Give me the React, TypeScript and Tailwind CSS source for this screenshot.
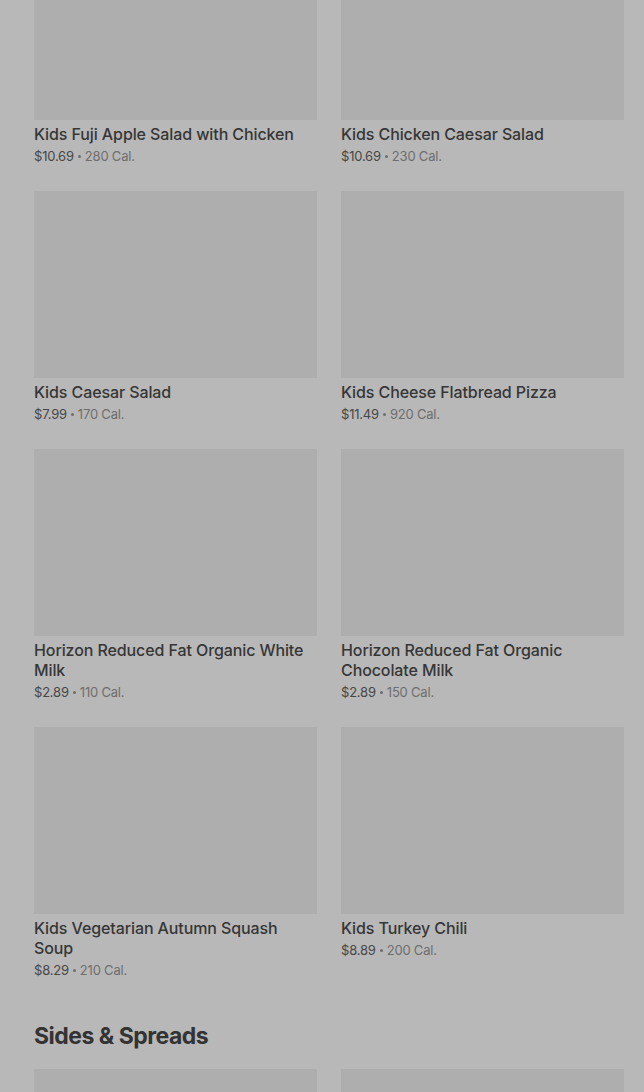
const ITEMS = [
  { name: 'Kids Fuji Apple Salad with Chicken', price: '$10.69', cal: '280 Cal.' },
  { name: 'Kids Chicken Caesar Salad', price: '$10.69', cal: '230 Cal.' },
  { name: 'Kids Caesar Salad', price: '$7.99', cal: '170 Cal.' },
  { name: 'Kids Cheese Flatbread Pizza', price: '$11.49', cal: '920 Cal.' },
  { name: 'Horizon Reduced Fat Organic White Milk', price: '$2.89', cal: '110 Cal.' },
  { name: 'Horizon Reduced Fat Organic Chocolate Milk', price: '$2.89', cal: '150 Cal.' },
  { name: 'Kids Vegetarian Autumn Squash Soup', price: '$8.29', cal: '210 Cal.' },
  { name: 'Kids Turkey Chili', price: '$8.89', cal: '200 Cal.' },
]

function MenuCard({ name, price, cal }: { name: string; price: string; cal: string }) {
  return (
    <div className="flex flex-col">
      <div className="h-[187px] w-full bg-[#aeaeae]" />
      <p className="mt-1 text-[16px] font-medium leading-5 tracking-[-0.1px] text-[#363636]">
        {name}
      </p>
      <div className="mt-[2px] flex h-5 items-center text-[13px] leading-5 tracking-[-0.2px] text-[#474747]">
        <span>{price}</span>
        <span className="mx-[4px] h-[3px] w-[3px] rounded-full bg-[#6e6e6e]" />
        <span className="text-[#6e6e6e]">{cal}</span>
      </div>
    </div>
  )
}

export default function App() {
  return (
    <div
      className="min-h-[1092px] w-full overflow-hidden bg-[#b8b8b8] pl-[34px] pr-[20px]"
      style={{ fontFamily: 'Inter, "Noto Sans", sans-serif' }}
    >
      <div className="-mt-[67px] grid grid-cols-2 gap-x-6 gap-y-[25px]">
        {ITEMS.map((item) => (
          <MenuCard key={item.name} {...item} />
        ))}
      </div>

      <h2 className="mt-10 text-[23px] font-bold leading-8 tracking-[-0.5px] text-[#333333]">
        Sides &amp; Spreads
      </h2>

      <div className="mt-[17px] grid grid-cols-2 gap-x-6">
        <div className="h-[187px] bg-[#aeaeae]" />
        <div className="h-[187px] bg-[#aeaeae]" />
      </div>
    </div>
  )
}
